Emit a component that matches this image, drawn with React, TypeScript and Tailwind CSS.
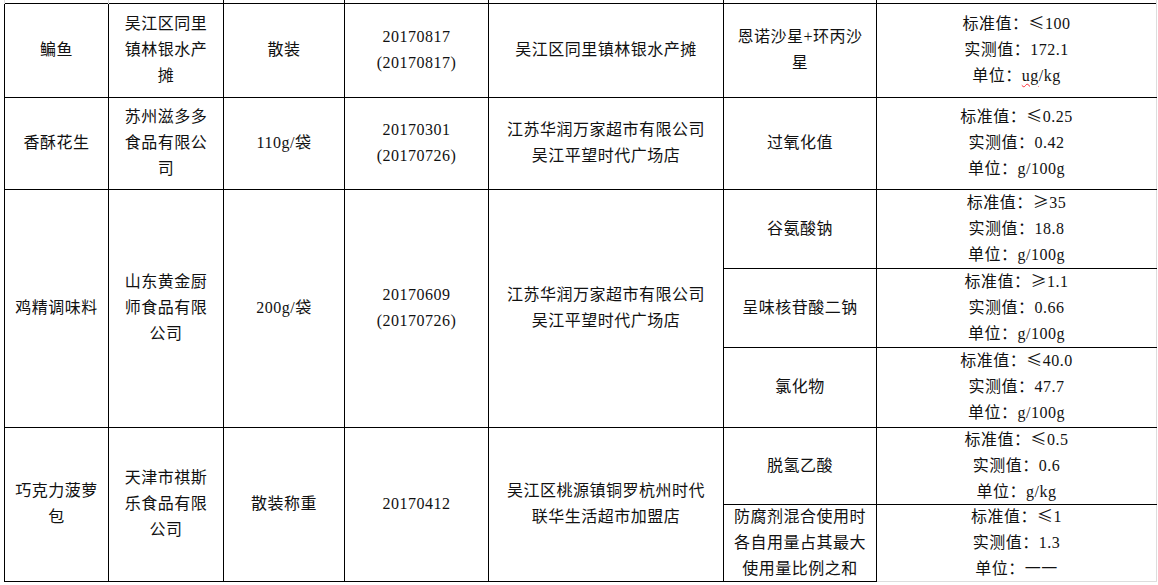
import React from 'react';

const font = { fontFamily: '"Liberation Serif", "Noto Sans CJK SC", serif' };
const cjk = { fontFamily: '"Noto Sans CJK SC", sans-serif' };

const td = 'border border-black p-0 text-center align-middle';
const line = 'h-[26px] leading-[26px]';

// ≤ / ≥ / —— are full width in the source, so force the CJK face for them
function Sym({ s }: { s: string }) {
  return (
    <span className="leading-none" style={cjk}>
      {s}
    </span>
  );
}

// the last row is shorter than its three lines, the text just spills a bit
function Tight({ children }: { children: React.ReactNode }) {
  return <div className="flex h-[70px] flex-col items-center justify-center overflow-visible">{children}</div>;
}

function Vals({ std, act, unit }: { std: React.ReactNode; act: string; unit: React.ReactNode }) {
  return (
    <div>
      <div className={line}>标准值：{std}</div>
      <div className={line}>实测值：{act}</div>
      <div className={line}>单位：{unit}</div>
    </div>
  );
}

function Lines({ items }: { items: string[] }) {
  return (
    <div>
      {items.map((t) => (
        <div key={t} className={line}>
          {t}
        </div>
      ))}
    </div>
  );
}

export default function App() {
  return (
    <div className="h-[585px] w-[1158px] overflow-hidden bg-white text-[#111]" style={font}>
      <table className="ml-[4px] w-[1152px] table-fixed border-collapse text-[16px] tracking-[0.5px]">
        <colgroup>
          <col className="w-[104px]" />
          <col className="w-[115px]" />
          <col className="w-[121px]" />
          <col className="w-[144px]" />
          <col className="w-[235px]" />
          <col className="w-[153px]" />
          <col className="w-[280px]" />
        </colgroup>
        <tbody>
          <tr className="h-[3px]">
            <td className="border-x border-[#ddd] p-0" />
            <td className="border-x border-black p-0" />
            <td className="border-x border-black p-0" />
            <td className="border-x border-black p-0" />
            <td className="border-x border-black p-0" />
            <td className="border-x border-black p-0" />
            <td className="border-x border-black border-r-[#ddd] p-0" />
          </tr>

          <tr className="h-[94px]">
            <td className={td}>鳊鱼</td>
            <td className={td}>
              <Lines items={['吴江区同里', '镇林银水产', '摊']} />
            </td>
            <td className={td}>散装</td>
            <td className={td}>
              <Lines items={['20170817', '(20170817)']} />
            </td>
            <td className={td}>吴江区同里镇林银水产摊</td>
            <td className={td}>
              <Lines items={['恩诺沙星+环丙沙', '星']} />
            </td>
            <td className={`${td} border-r-[#ddd]`}>
              <Vals
                std={<><Sym s="≤" />100</>}
                act="172.1"
                unit={
                  <>
                    <span className="underline decoration-red-500 decoration-wavy decoration-1 underline-offset-2">ug</span>/kg
                  </>
                }
              />
            </td>
          </tr>

          <tr className="h-[92px]">
            <td className={td}>香酥花生</td>
            <td className={td}>
              <Lines items={['苏州滋多多', '食品有限公', '司']} />
            </td>
            <td className={td}>110g/袋</td>
            <td className={td}>
              <Lines items={['20170301', '(20170726)']} />
            </td>
            <td className={td}>
              <Lines items={['江苏华润万家超市有限公司', '吴江平望时代广场店']} />
            </td>
            <td className={td}>过氧化值</td>
            <td className={`${td} border-r-[#ddd]`}>
              <Vals std={<><Sym s="≤" />0.25</>} act="0.42" unit="g/100g" />
            </td>
          </tr>

          <tr className="h-[79px]">
            <td className={td} rowSpan={3}>鸡精调味料</td>
            <td className={td} rowSpan={3}>
              <Lines items={['山东黄金厨', '师食品有限', '公司']} />
            </td>
            <td className={td} rowSpan={3}>200g/袋</td>
            <td className={td} rowSpan={3}>
              <Lines items={['20170609', '(20170726)']} />
            </td>
            <td className={td} rowSpan={3}>
              <Lines items={['江苏华润万家超市有限公司', '吴江平望时代广场店']} />
            </td>
            <td className={td}>谷氨酸钠</td>
            <td className={`${td} border-r-[#ddd]`}>
              <Vals std={<><Sym s="≥" />35</>} act="18.8" unit="g/100g" />
            </td>
          </tr>
          <tr className="h-[79px]">
            <td className={td}>呈味核苷酸二钠</td>
            <td className={`${td} border-r-[#ddd]`}>
              <Vals std={<><Sym s="≥" />1.1</>} act="0.66" unit="g/100g" />
            </td>
          </tr>
          <tr className="h-[80px]">
            <td className={td}>氯化物</td>
            <td className={`${td} border-r-[#ddd]`}>
              <Vals std={<><Sym s="≤" />40.0</>} act="47.7" unit="g/100g" />
            </td>
          </tr>

          <tr className="h-[77px]">
            <td className={td} rowSpan={2}>
              <Lines items={['巧克力菠萝', '包']} />
            </td>
            <td className={td} rowSpan={2}>
              <Lines items={['天津市祺斯', '乐食品有限', '公司']} />
            </td>
            <td className={td} rowSpan={2}>散装称重</td>
            <td className={td} rowSpan={2}>20170412</td>
            <td className={td} rowSpan={2}>
              <Lines items={['吴江区桃源镇铜罗杭州时代', '联华生活超市加盟店']} />
            </td>
            <td className={td}>
              <Tight>脱氢乙酸</Tight>
            </td>
            <td className={`${td} border-r-[#ddd]`}>
              <Tight>
                <Vals std={<><Sym s="≤" />0.5</>} act="0.6" unit="g/kg" />
              </Tight>
            </td>
          </tr>
          <tr className="h-[77px]">
            <td className={td}>
              <Tight>
                <Lines items={['防腐剂混合使用时', '各自用量占其最大', '使用量比例之和']} />
              </Tight>
            </td>
            <td className={`${td} border-r-[#ddd] border-b-[#ddd]`}>
              <Tight>
                <Vals std={<><Sym s="≤" />1</>} act="1.3" unit={<Sym s="一一" />} />
              </Tight>
            </td>
          </tr>
        </tbody>
      </table>
    </div>
  );
}
